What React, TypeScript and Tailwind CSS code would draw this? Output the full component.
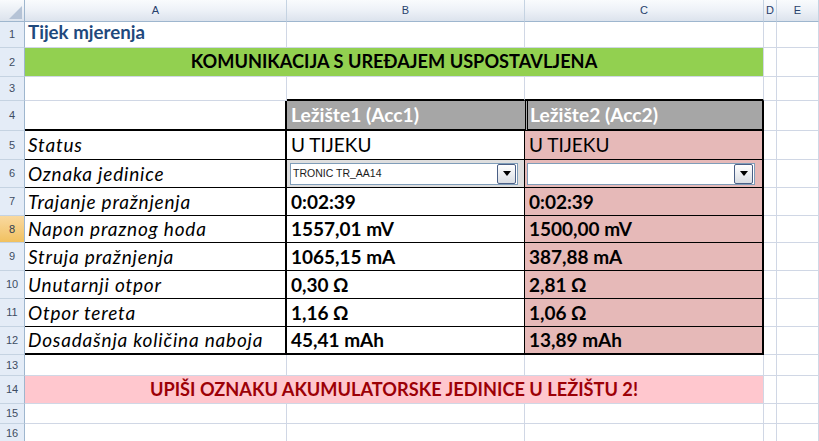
import React from "react";

const GRID = "border-r border-b border-r-[#d0d7e5] border-b-[#d0d7e5]";
const FONT = { fontFamily: "Lato, 'Open Sans', sans-serif" } as React.CSSProperties;

function RowHead({ n, active }: { n: number; active?: boolean }) {
  return (
    <div
      className={
        "flex items-center justify-center border-r border-b border-r-[#9eb6ce] border-b-[#c5d3e2] text-[11px] " +
        (active
          ? "bg-gradient-to-b from-[#f9d99f] to-[#f1c15f] text-[#2d3c52]"
          : "bg-[#e4ecf7] text-[#3e4d63]")
      }
      style={{ fontFamily: "'Liberation Sans', Arial, sans-serif" }}
    >
      {n}
    </div>
  );
}

function ColHead({ label }: { label: string }) {
  return (
    <div
      className="flex items-center justify-center border-r border-b border-r-[#c5d3e2] border-b-[#9eb6ce] bg-gradient-to-b from-[#f9fbfd] via-[#edf1f7] to-[#dce3ed] text-[11px] text-[#27416b]"
      style={{ fontFamily: "'Liberation Sans', Arial, sans-serif" }}
    >
      {label}
    </div>
  );
}

function Combo({ text }: { text?: string }) {
  return (
    <div className="flex h-[22px] flex-1 items-center border border-[#7f9db9] bg-white pl-[2px] pr-[1px]">
      <span
        className="flex-1 text-[10.5px] text-[#1a1a1a]"
        style={{ fontFamily: "'Liberation Sans', Arial, sans-serif" }}
      >
        {text}
      </span>
      <div className="flex h-[20px] w-[19px] items-center justify-center rounded-[2px] border border-[#4a5f85] bg-gradient-to-b from-[#ffffff] to-[#d9dde3]">
        <svg width="8" height="5" viewBox="0 0 8 5">
          <path d="M0 0 L8 0 L4 5 Z" fill="#000" />
        </svg>
      </div>
    </div>
  );
}

const rows: { label: string; b: string; c: string }[] = [
  { label: "Trajanje pražnjenja", b: "0:02:39", c: "0:02:39" },
  { label: "Napon praznog hoda", b: "1557,01 mV", c: "1500,00 mV" },
  { label: "Struja pražnjenja", b: "1065,15 mA", c: "387,88 mA" },
  { label: "Unutarnji otpor", b: "0,30 Ω", c: "2,81 Ω" },
  { label: "Otpor tereta", b: "1,16 Ω", c: "1,06 Ω" },
];

const LABEL = "flex items-center pt-[1px] pl-[3px] text-[19px] italic tracking-[0.8px]";
const VAL = "flex items-center pt-[1px] pl-[4px] text-[19px]";

export default function App() {
  return (
    <div
      className="grid h-[441px] w-[819px] overflow-hidden bg-white text-black"
      style={{
        ...FONT,
        gridTemplateColumns: "25px 262px 238px 239px 13px 1fr",
        gridTemplateRows:
          "22px 26px 29px 24px 30px 29px 28px 28px 27px 28px 28px 28px 28px 21px 28px 20px 20px",
      }}
    >
      {/* header row */}
      <div className="relative border-r border-b border-r-[#9eb6ce] border-b-[#9eb6ce] bg-gradient-to-b from-[#f9fbfd] to-[#dce3ed]">
        <svg className="absolute bottom-[2px] right-[2px]" width="13" height="13" viewBox="0 0 13 13">
          <path d="M13 0 L13 13 L0 13 Z" fill="#b5c3d6" />
        </svg>
      </div>
      <ColHead label="A" />
      <ColHead label="B" />
      <ColHead label="C" />
      <ColHead label="D" />
      <ColHead label="E" />

      {/* row 1 */}
      <RowHead n={1} />
      <div className={GRID + " flex items-end pb-[1px] pl-[3px] text-[18.7px] font-bold text-[#1f497d]"}>
        Tijek mjerenja
      </div>
      <div className={GRID} />
      <div className={GRID} />
      <div className={GRID} />
      <div className={GRID} />

      {/* row 2 */}
      <RowHead n={2} />
      <div className={GRID + " col-span-3 flex items-center justify-center bg-[#92d050] text-[18.2px] font-bold"}>
        KOMUNIKACIJA S UREĐAJEM USPOSTAVLJENA
      </div>
      <div className={GRID} />
      <div className={GRID} />

      {/* row 3 */}
      <RowHead n={3} />
      <div className={GRID} />
      <div className="border-r border-b-2 border-r-[#d0d7e5] border-b-black" />
      <div className="border-r border-b-2 border-r-[#d0d7e5] border-b-black" />
      <div className={GRID} />
      <div className={GRID} />

      {/* row 4 */}
      <RowHead n={4} />
      <div className="border-r-2 border-b-2 border-black" />
      <div className="flex items-center border-b-2 border-b-black bg-[#a6a6a6] pl-[4px] text-[19.2px] font-bold text-white">
        Ležište1 (Acc1)
      </div>
      <div className="flex items-center border-b-2 border-r-2 border-l-[3px] border-black bg-[#a6a6a6] pl-[2px] text-[19.2px] font-bold text-white [border-left-style:double]">
        Ležište2 (Acc2)
      </div>
      <div className={GRID} />
      <div className={GRID} />

      {/* row 5 */}
      <RowHead n={5} />
      <div className={LABEL + " border-r-2 border-b border-black"}>Status</div>
      <div className={VAL + " border-r border-b border-black"}>U TIJEKU</div>
      <div className={VAL + " border-r-2 border-b border-black bg-[#e6b9b8]"}>U TIJEKU</div>
      <div className={GRID} />
      <div className={GRID} />

      {/* row 6 */}
      <RowHead n={6} />
      <div className={LABEL + " border-r-2 border-b border-black"}>Oznaka jedinice</div>
      <div className="flex items-center border-r border-b border-black bg-[#dedede] pl-[3px] pr-[6px]">
        <Combo text="TRONIC TR_AA14" />
      </div>
      <div className="flex items-center border-r-2 border-b border-black bg-[#e6b9b8] pl-[2px] pr-[7px]">
        <Combo />
      </div>
      <div className={GRID} />
      <div className={GRID} />

      {/* rows 7-11 */}
      {rows.map((r, i) => (
        <React.Fragment key={r.label}>
          <RowHead n={7 + i} active={i === 1} />
          <div className={LABEL + " border-r-2 border-b border-black"}>{r.label}</div>
          <div className={VAL + " border-r border-b border-black font-bold"}>{r.b}</div>
          <div className={VAL + " border-r-2 border-b border-black bg-[#e6b9b8] font-bold"}>{r.c}</div>
          <div className={GRID} />
          <div className={GRID} />
        </React.Fragment>
      ))}

      {/* row 12 */}
      <RowHead n={12} />
      <div className={LABEL + " border-r-2 border-b-2 border-black"}>Dosadašnja količina naboja</div>
      <div className={VAL + " border-r border-b-2 border-black font-bold"}>45,41 mAh</div>
      <div className={VAL + " border-r-2 border-b-2 border-black bg-[#e6b9b8] font-bold"}>13,89 mAh</div>
      <div className={GRID} />
      <div className={GRID} />

      {/* row 13 */}
      <RowHead n={13} />
      <div className={GRID} />
      <div className={GRID} />
      <div className={GRID} />
      <div className={GRID} />
      <div className={GRID} />

      {/* row 14 */}
      <RowHead n={14} />
      <div className={GRID + " col-span-3 flex items-center justify-center bg-[#ffc7ce] text-[18.2px] font-bold text-[#9c0006]"}>
        UPIŠI OZNAKU AKUMULATORSKE JEDINICE U LEŽIŠTU 2!
      </div>
      <div className={GRID} />
      <div className={GRID} />

      {/* rows 15-16 */}
      {[15, 16].map((n) => (
        <React.Fragment key={n}>
          <RowHead n={n} />
          <div className={GRID} />
          <div className={GRID} />
          <div className={GRID} />
          <div className={GRID} />
          <div className={GRID} />
        </React.Fragment>
      ))}
    </div>
  );
}
